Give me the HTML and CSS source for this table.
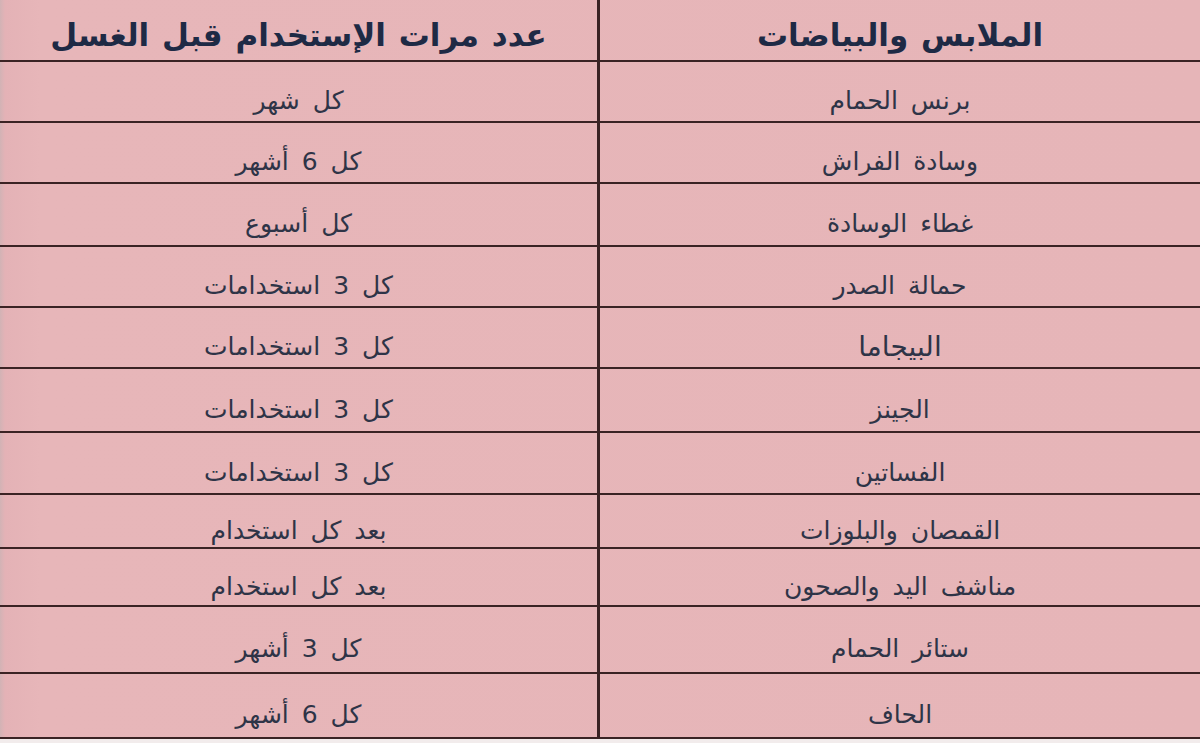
FILE: index.html
```html
<!DOCTYPE html>
<html lang="ar" dir="rtl">
<head>
<meta charset="utf-8">
<link rel="stylesheet" href="styles.css">
</head>
<body>
<div class="sheet">
  <div class="table">
    <div class="cell head item">الملابس والبياضات</div>
    <div class="cell head">عدد مرات الإستخدام قبل الغسل</div>

    <div class="cell item">برنس الحمام</div>
    <div class="cell">كل شهر</div>

    <div class="cell item">وسادة الفراش</div>
    <div class="cell">كل 6 أشهر</div>

    <div class="cell item">غطاء الوسادة</div>
    <div class="cell">كل أسبوع</div>

    <div class="cell item">حمالة الصدر</div>
    <div class="cell">كل 3 استخدامات</div>

    <div class="cell item big">البيجاما</div>
    <div class="cell">كل 3 استخدامات</div>

    <div class="cell item">الجينز</div>
    <div class="cell">كل 3 استخدامات</div>

    <div class="cell item">الفساتين</div>
    <div class="cell">كل 3 استخدامات</div>

    <div class="cell item">القمصان والبلوزات</div>
    <div class="cell">بعد كل استخدام</div>

    <div class="cell item">مناشف اليد والصحون</div>
    <div class="cell">بعد كل استخدام</div>

    <div class="cell item">ستائر الحمام</div>
    <div class="cell">كل 3 أشهر</div>

    <div class="cell item">الحاف</div>
    <div class="cell">كل 6 أشهر</div>
  </div>
</div>
</body>
</html>
```

FILE: styles.css
```css
html, body {
  margin: 0;
  padding: 0;
  background: #f4eeee;
}

.sheet {
  width: 1200px;
  height: 743px;
  overflow: hidden;
  background: #f2ecec;
}

.table {
  direction: rtl;
  display: grid;
  grid-template-columns: 603px 597px;
  grid-template-rows: 62px 61px 61px 63px 61px 61px 64px 62px 54px 58px 67px 65px;
  background: linear-gradient(90deg, #d2b3b5 0, #e4b2b6 5px, #e7b6b9 40px, #e6b5b8 100%);
  font-family: "DejaVu Sans", "Noto Sans", sans-serif;
  color: #2e3447;
}

.cell {
  box-sizing: border-box;
  border-bottom: 2px solid #3a2324;
  display: flex;
  align-items: center;
  justify-content: center;
  padding-top: 18px;
  font-size: 25px;
  word-spacing: 5px;
  white-space: nowrap;
}

.item {
  border-left: 3px solid #3a2324;
}

.head {
  padding-top: 9px;
  font-size: 31px;
  font-weight: bold;
  word-spacing: 2px;
  color: #1e2a45;
}

.big {
  font-size: 28px;
}
```
